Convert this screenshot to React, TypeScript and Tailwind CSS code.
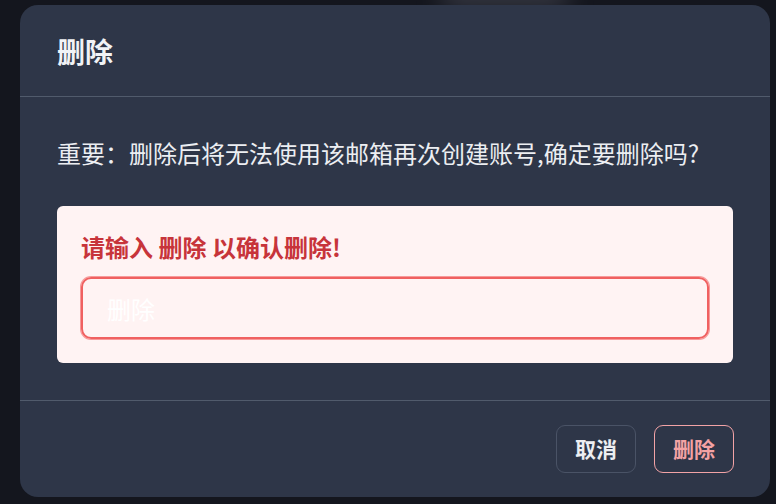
import React from "react";

const font = { fontFamily: '"Noto Sans CJK SC", "Noto Sans", sans-serif' };

export default function App() {
  return (
    <div
      className="relative w-[776px] h-[504px] overflow-hidden bg-[#14161e] pt-[5px] pl-[20px]"
      style={font}
    >
      {/* faint glow behind the top edge */}
      <div className="absolute left-[440px] top-[-20px] w-[130px] h-[30px] rounded-full bg-[#4a4c58] blur-[12px] opacity-60" />

      <div className="relative w-[750px] h-[492px] rounded-[18px] bg-[#2e3648] flex flex-col">
        <div className="h-[92px] shrink-0 px-[37px] flex items-center border-b border-[#515b6c]">
          <h2 className="text-[28px] leading-none font-semibold text-[#f1f3f6]">删除</h2>
        </div>

        <div className="h-[303px] shrink-0 px-[37px] pt-[38px]">
          <p className="text-[24px] leading-[36px] text-[#eceef2]">
            重要：删除后将无法使用该邮箱再次创建账号,确定要删除吗?
          </p>
          <div className="mt-[35px] h-[157px] rounded-[6px] bg-[#fff3f3] p-[24px] pt-[23px] flex flex-col gap-[12px]">
            <label className="text-[24px] leading-[36px] font-bold text-[#c7343a]">
              请输入 删除 以确认删除!
            </label>
            <input
              placeholder="删除"
              className="h-[62px] w-full rounded-[10px] border-2 border-[#f06060] shadow-[0_0_0_1px_#f79a9a] bg-transparent px-[24px] text-[24px] outline-none placeholder:text-white"
              style={font}
            />
          </div>
        </div>

        <div className="flex-1 border-t border-[#515b6c] flex items-center justify-end gap-[18px] px-[36px]">
          <button className="w-[80px] h-[48px] rounded-[9px] border border-[#4a5366] text-[21px] font-semibold text-[#eceef2]">
            取消
          </button>
          <button className="w-[80px] h-[48px] rounded-[9px] border border-[#f2a3a6] text-[21px] font-semibold text-[#f4a2a4]">
            删除
          </button>
        </div>
      </div>
    </div>
  );
}
